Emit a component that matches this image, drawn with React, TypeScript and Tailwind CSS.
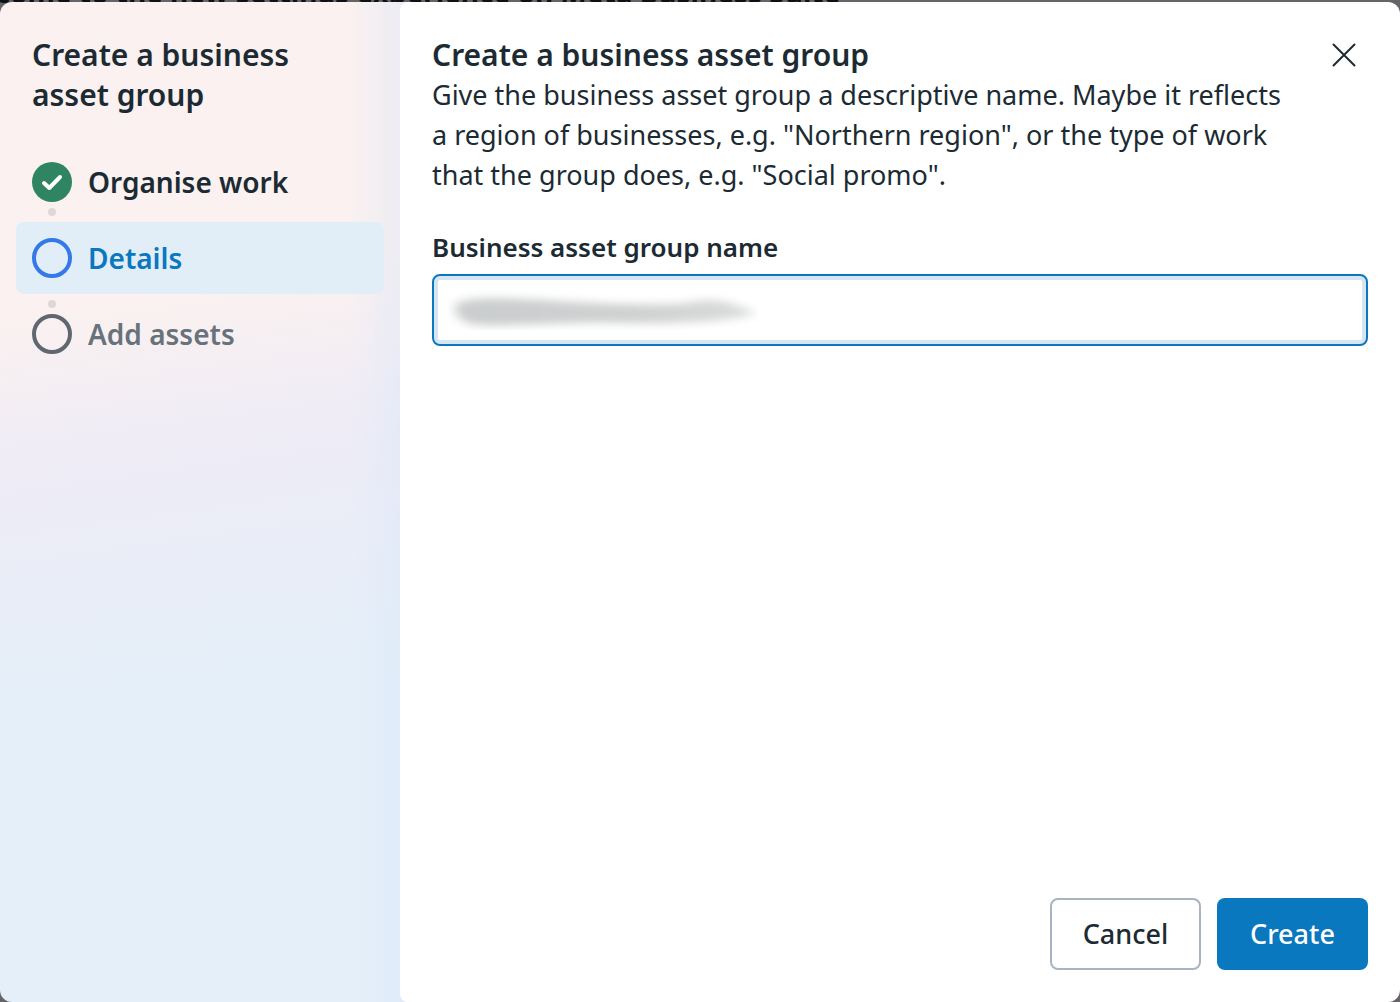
import { useState } from "react";

type StepState = "done" | "current" | "upcoming";

const steps: { label: string; state: StepState }[] = [
  { label: "Organise work", state: "done" },
  { label: "Details", state: "current" },
  { label: "Add assets", state: "upcoming" },
];

const rowStyles: Record<StepState, string> = {
  done: "h-10 text-[#1c2b33]",
  current: "h-[72px] rounded-lg bg-[#e1edf7] text-[#0a78be]",
  upcoming: "h-10 text-[#67727b]",
};

function StepIcon({ state }: { state: StepState }) {
  if (state === "done") {
    return (
      <svg viewBox="0 0 40 40" className="size-10 shrink-0" aria-hidden="true">
        <circle cx="20" cy="20" r="20" fill="#2f8562" />
        <path
          d="M12 21l5.3 5L28 15"
          fill="none"
          stroke="#fff"
          strokeWidth="4"
          strokeLinecap="round"
          strokeLinejoin="round"
        />
      </svg>
    );
  }
  return (
    <svg viewBox="0 0 40 40" className="size-10 shrink-0" aria-hidden="true">
      <circle
        cx="20"
        cy="20"
        r="18"
        fill="none"
        stroke={state === "current" ? "#337ae8" : "#606770"}
        strokeWidth="4"
      />
    </svg>
  );
}

function Sidebar() {
  return (
    <aside className="w-[408px] shrink-0 bg-[linear-gradient(90deg,transparent_86%,#d9e6f870_99%),linear-gradient(172deg,#faf1f0_0%,#faf1f0_30%,#efecf6_44%,#e4eff9_68%,#e4eff9_100%)] px-4 pt-[33px] pr-6">
      <h2 className="w-80 pl-4 text-[30px] leading-10 font-semibold">Create a business asset group</h2>
      <ol className="mt-[47px]">
        {steps.map((step, i) => (
          <li key={step.label} aria-current={step.state === "current" ? "step" : undefined}>
            {i > 0 && (
              <div className="flex h-5 items-center pl-8">
                <span className="size-2 rounded-full bg-[#dfd8d8]" />
              </div>
            )}
            <div className={`flex items-center gap-4 px-4 text-[28px] font-semibold ${rowStyles[step.state]}`}>
              <StepIcon state={step.state} />
              <span>{step.label}</span>
            </div>
          </li>
        ))}
      </ol>
    </aside>
  );
}

function RedactedValue() {
  return (
    <svg
      viewBox="0 0 310 40"
      className="pointer-events-none absolute top-4 left-4 h-10 w-[310px]"
      aria-hidden="true"
    >
      <defs>
        <filter id="smear" x="-10%" y="-50%" width="120%" height="200%">
          <feGaussianBlur stdDeviation="6 4" />
        </filter>
        <linearGradient id="smearFill">
          <stop offset="0" stopColor="#cbcdce" />
          <stop offset="0.6" stopColor="#cfd1d1" />
          <stop offset="1" stopColor="#dbdcdc" />
        </linearGradient>
      </defs>
      <path
        d="M8 14C20 6 60 8 110 11S220 16 245 12C270 6 295 16 308 24C275 33 220 34 170 33S60 37 30 35C14 34 4 24 8 14Z"
        fill="url(#smearFill)"
        filter="url(#smear)"
      />
    </svg>
  );
}

export default function App() {
  const [name, setName] = useState("");

  return (
    <div className="relative flex min-h-screen flex-col overflow-hidden bg-[#666467] pt-0.5 font-['Noto_Sans',sans-serif] text-[#1c2b33]">
      <p className="absolute -top-7 -left-14 text-[28px] leading-10 font-bold whitespace-nowrap text-[#0b1114]">
        Welcome to the new settings experience on Meta Business Suite
      </p>
      <div
        role="dialog"
        aria-labelledby="dialog-title"
        className="relative flex grow overflow-hidden rounded-xl"
      >
        <Sidebar />
        <main className="-ml-2 flex min-w-0 grow flex-col rounded-lg bg-white px-8 pt-[33px] pb-8">
          <header className="flex items-start justify-between gap-8">
            <div className="max-w-[864px]">
              <h1 id="dialog-title" className="text-[30px] leading-10 font-semibold">
                Create a business asset group
              </h1>
              <p className="text-[27px] leading-10">
                Give the business asset group a descriptive name. Maybe it reflects a region of businesses, e.g.
                "Northern region", or the type of work that the group does, e.g. "Social promo".
              </p>
            </div>
            <button type="button" aria-label="Close" className="flex h-10 w-12 shrink-0 items-center justify-center">
              <svg viewBox="0 0 24 24" className="size-6" aria-hidden="true">
                <path d="M1.5 1.5l21 21M22.5 1.5l-21 21" stroke="#1c2b33" strokeWidth="2" strokeLinecap="round" />
              </svg>
            </button>
          </header>
          <form className="mt-8 flex grow flex-col" onSubmit={(e) => e.preventDefault()}>
            <label htmlFor="group-name" className="text-[26px] leading-10 font-semibold">
              Business asset group name
            </label>
            <div className="relative mt-[7px]">
              <input
                id="group-name"
                type="text"
                value={name}
                onChange={(e) => setName(e.target.value)}
                className="h-[72px] w-full rounded-lg border-2 border-[#0a78be] bg-white px-5 text-[27px] inset-ring-4 inset-ring-[#d5e6f2] outline-none"
              />
              {name === "" && <RedactedValue />}
            </div>
            <div className="mt-auto flex justify-end gap-4 pt-8">
              <button
                type="button"
                className="h-[72px] min-w-[151px] rounded-lg border-2 border-[#a8b4c2] bg-white px-6 text-[27px] font-medium"
              >
                Cancel
              </button>
              <button
                type="submit"
                className="h-[72px] min-w-[151px] rounded-lg bg-[#0a78be] px-6 text-[27px] font-medium text-white"
              >
                Create
              </button>
            </div>
          </form>
        </main>
      </div>
    </div>
  );
}
